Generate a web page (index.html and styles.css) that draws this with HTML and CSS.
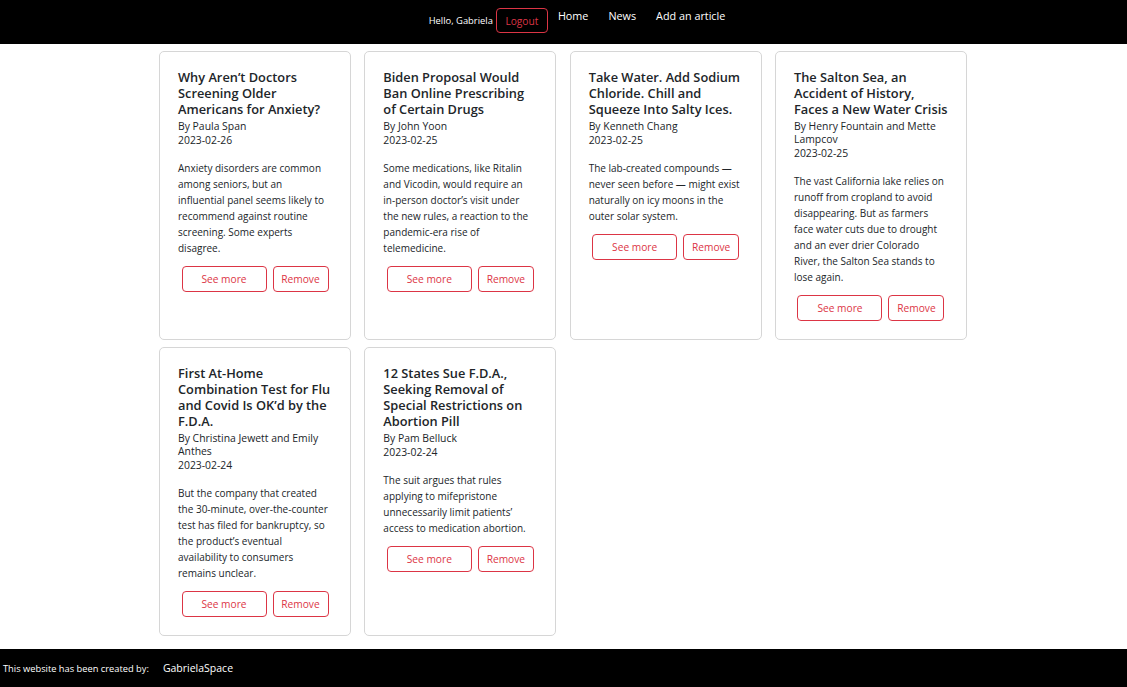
FILE: index.html
```html
<!DOCTYPE html>
<html lang="en">
<head>
<meta charset="utf-8">
<title>News</title>
<link rel="stylesheet" href="styles.css">
</head>
<body>
<header class="topbar">
  <div class="user">
    <span class="hello">Hello, Gabriela</span>
    <button class="logout">Logout</button>
  </div>
  <nav class="links">
    <a href="#">Home</a>
    <a href="#">News</a>
    <a href="#">Add an article</a>
  </nav>
</header>

<main class="grid">
  <article class="card">
    <h5 class="title">Why Aren’t Doctors Screening Older Americans for Anxiety?</h5>
    <p class="author">By Paula Span</p>
    <p class="date">2023-02-26</p>
    <p class="desc">Anxiety disorders are common among seniors, but an influential panel seems likely to recommend against routine screening. Some experts disagree.</p>
    <div class="actions"><button class="btn more">See more</button><button class="btn remove">Remove</button></div>
  </article>
  <article class="card">
    <h5 class="title">Biden Proposal Would Ban Online Prescribing of Certain Drugs</h5>
    <p class="author">By John Yoon</p>
    <p class="date">2023-02-25</p>
    <p class="desc">Some medications, like Ritalin and Vicodin, would require an in-person doctor’s visit under the new rules, a reaction to the pandemic-era rise of telemedicine.</p>
    <div class="actions"><button class="btn more">See more</button><button class="btn remove">Remove</button></div>
  </article>
  <article class="card">
    <h5 class="title">Take Water. Add Sodium Chloride. Chill and Squeeze Into Salty Ices.</h5>
    <p class="author">By Kenneth Chang</p>
    <p class="date">2023-02-25</p>
    <p class="desc">The lab-created compounds — never seen before — might exist naturally on icy moons in the outer solar system.</p>
    <div class="actions"><button class="btn more">See more</button><button class="btn remove">Remove</button></div>
  </article>
  <article class="card">
    <h5 class="title">The Salton Sea, an Accident of History, Faces a New Water Crisis</h5>
    <p class="author">By Henry Fountain and Mette Lampcov</p>
    <p class="date">2023-02-25</p>
    <p class="desc">The vast California lake relies on runoff from cropland to avoid disappearing. But as farmers face water cuts due to drought and an ever drier Colorado River, the Salton Sea stands to lose again.</p>
    <div class="actions"><button class="btn more">See more</button><button class="btn remove">Remove</button></div>
  </article>
  <article class="card">
    <h5 class="title">First At-Home Combination Test for Flu and Covid Is OK’d by the F.D.A.</h5>
    <p class="author">By Christina Jewett and Emily Anthes</p>
    <p class="date">2023-02-24</p>
    <p class="desc">But the company that created the 30-minute, over-the-counter test has filed for bankruptcy, so the product’s eventual availability to consumers remains unclear.</p>
    <div class="actions"><button class="btn more">See more</button><button class="btn remove">Remove</button></div>
  </article>
  <article class="card">
    <h5 class="title">12 States Sue F.D.A., Seeking Removal of Special Restrictions on Abortion Pill</h5>
    <p class="author">By Pam Belluck</p>
    <p class="date">2023-02-24</p>
    <p class="desc">The suit argues that rules applying to mifepristone unnecessarily limit patients’ access to medication abortion.</p>
    <div class="actions"><button class="btn more">See more</button><button class="btn remove">Remove</button></div>
  </article>
</main>

<footer class="footer">
  <span class="credit">This website has been created by:</span>
  <span class="brand">GabrielaSpace</span>
</footer>
</body>
</html>
```
FILE: styles.css
```css
* { box-sizing: border-box; }
body {
  margin: 0;
  font-family: "Open Sans", "Noto Sans", sans-serif;
  color: #212529;
  background: #fff;
}
.topbar {
  background: #000;
  height: 44px;
  display: flex;
  justify-content: center;
  align-items: flex-start;
  padding-left: 27px;
}
.user {
  display: flex;
  align-items: center;
  gap: 3px;
  padding-top: 8px;
}
.hello {
  color: #fff;
  font-size: 9.4px;
}
.logout {
  height: 25px;
  width: 52px;
  padding: 0;
  background: transparent;
  border: 1px solid #dc3545;
  border-radius: 4px;
  color: #dc3545;
  font-family: inherit;
  font-size: 10.2px;
}
.links {
  display: flex;
  margin-left: 10px;
  gap: 20px;
  padding-top: 8px;
}
.links a {
  color: #fff;
  text-decoration: none;
  font-size: 10.8px;
  line-height: 16px;
}
.grid {
  width: 809px;
  margin: 7px auto 0;
  display: grid;
  grid-template-columns: repeat(4, 192px);
  column-gap: 13.33px;
  row-gap: 7px;
  padding-bottom: 13px;
}
.card {
  border: 1px solid #d6d6d6;
  border-radius: 5px;
  padding: 17px 18px 18px;
  display: flex;
  flex-direction: column;
}
.title {
  margin: 0 0 3px;
  font-size: 12.8px;
  font-weight: 600;
  line-height: 16px;
}
.author {
  margin: 0;
  font-size: 10.4px;
  line-height: 13px;
}
.date {
  margin: 0;
  font-size: 10.4px;
  line-height: 14px;
}
.desc {
  margin: 13px 0 0;
  padding-right: 2px;
  font-size: 10px;
  line-height: 16px;
}
.actions {
  margin-top: 10px;
  display: flex;
  justify-content: center;
  gap: 6px;
}
.btn {
  height: 26px;
  padding: 0;
  background: #fff;
  border: 1px solid #dc3545;
  border-radius: 4px;
  color: #dc3545;
  font-family: inherit;
  font-size: 10.2px;
}
.btn.more { width: 85px; }
.btn.remove { width: 56px; }
.footer {
  background: #000;
  height: 38px;
  display: flex;
  align-items: center;
  padding-left: 3px;
  gap: 14px;
  color: #fff;
}
.credit { font-size: 9.3px; }
.brand { font-size: 10.5px; }
```
